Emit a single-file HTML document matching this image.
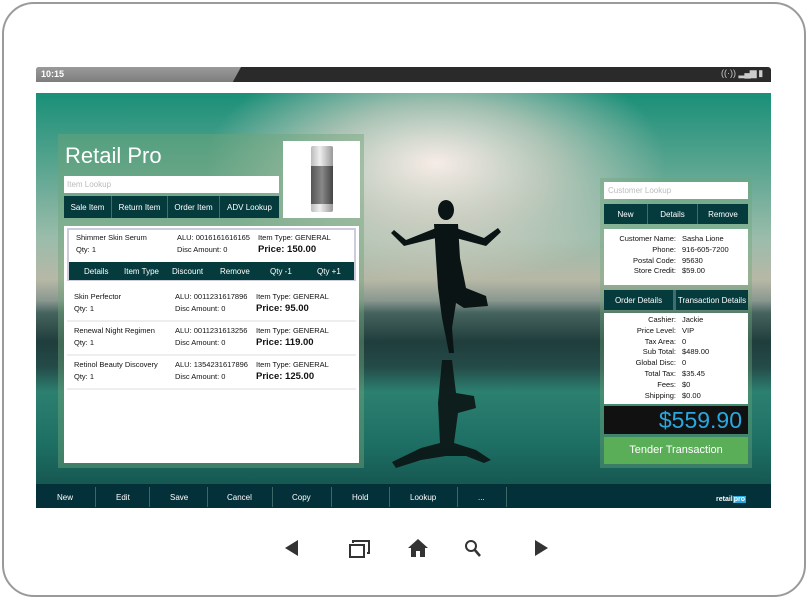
<!DOCTYPE html>
<html><head><meta charset="utf-8"><style>
*{margin:0;padding:0;box-sizing:border-box}
body{width:808px;height:600px;background:#fff;position:relative;overflow:hidden;font-family:"Liberation Sans",sans-serif}
.a{position:absolute}
.dev{left:2px;top:2px;width:804px;height:595px;border:2px solid #9a9a9a;border-radius:32px;background:#fff}
.status{left:36px;top:67px;width:735px;height:15px;background:#2a2a2a;border-radius:3px 3px 0 0;overflow:hidden}
.screen{left:36px;top:93px;width:735px;height:415px;overflow:hidden;
background:
radial-gradient(ellipse 230px 120px at 400px 70px,rgba(255,240,235,.95),rgba(240,220,210,.6) 50%,rgba(200,210,200,0) 100%),
linear-gradient(180deg,#1a8f78 0%,#5aa590 18%,#9bbcab 35%,#b7b8a6 45%,#8a9890 50%,#46635e 53%,#1f3d3c 60%,#244b48 66%,#2c8070 72%,#1d6e63 85%,#114a47 100%)}
.lp{left:22px;top:41px;width:306px;height:334px;background:rgba(110,165,120,.45)}
.btn{background:#063b3e;color:#fff;font-size:8px;display:flex;align-items:center;justify-content:center;border-right:1px solid #3c6f6f}
.row{display:flex}
.t{font-size:7.5px;color:#111;line-height:12px}
.b{font-weight:bold;font-size:9.5px}
.tb span{position:absolute;top:9px;color:#fff;font-size:8px}
.sep{position:absolute;top:3px;width:1px;height:20px;background:#3d6868}
.kv{display:flex;font-size:7.5px;line-height:10.8px;color:#111}
.kv b{font-weight:normal;width:72px;text-align:right;margin-right:6px}
</style></head><body>
<div class="a dev"></div>
<div class="a status">
 <div class="a" style="left:0;top:0;width:205px;height:15px;background:linear-gradient(#9a9a9a,#7d7d7d);clip-path:polygon(0 0,100% 0,96% 100%,0 100%)"></div>
 <div class="a" style="left:5px;top:2px;color:#fff;font-size:9px;font-weight:bold">10:15</div>
 <div class="a" style="left:685px;top:1px;color:#ccc;font-size:9px">((·)) <span style="letter-spacing:-1px">▂▄▆</span> ▮</div>
</div>
<div class="a screen">
 <svg class="a" style="left:340px;top:95px" width="140" height="300" viewBox="0 0 140 300">
  <g fill="#0b1414">
   <ellipse cx="70" cy="22" rx="8" ry="10"/>
   <path d="M58 36 L82 36 L84 70 L90 100 L110 108 L112 118 L88 120 L80 115 L76 140 L78 165 L73 165 L66 130 L62 100 L60 70 Z"/>
   <path d="M60 40 L30 52 L18 42 L15 45 L28 58 L60 50 Z"/>
   <path d="M80 40 L108 50 L122 40 L125 44 L110 58 L80 50 Z"/>
   <path d="M66 172 L76 172 L80 205 L98 208 L100 220 L82 225 L78 255 L100 262 L115 272 L108 275 L90 268 L70 268 L45 272 L20 280 L16 274 L45 260 L64 255 L62 215 Z" opacity=".9"/>
  </g>
 </svg>
 <div class="a lp"></div>
 <div class="a" style="left:29px;top:50px;color:#fff;font-size:22px;font-weight:300">Retail Pro</div>
 <div class="a" style="left:28px;top:83px;width:215px;height:17px;background:#fff;font-size:8px;color:#bbb;padding:4px 3px">Item Lookup</div>
 <div class="a row" style="left:28px;top:103px;width:215px;height:22px">
  <div class="btn" style="width:48px">Sale Item</div><div class="btn" style="width:56px">Return Item</div><div class="btn" style="width:52px">Order Item</div><div class="btn" style="width:59px;border:0">ADV Lookup</div>
 </div>
 <div class="a" style="left:247px;top:48px;width:77px;height:77px;background:#fff">
  <div class="a" style="left:28px;top:5px;width:22px;height:66px;background:linear-gradient(90deg,#bbb,#eee 40%,#999);border-radius:2px"></div>
  <div class="a" style="left:28px;top:25px;width:22px;height:38px;background:linear-gradient(90deg,#555,#888 50%,#444)"></div>
 </div>
 <div class="a" style="left:28px;top:133px;width:295px;height:237px;background:#fff">
  <div class="a" style="left:3px;top:2px;width:289px;height:53px;border:2px solid #ccd">
   <div class="a t" style="left:7px;top:2px">Shimmer Skin Serum<br>Qty: 1</div>
   <div class="a t" style="left:108px;top:2px">ALU: 0016161616165<br>Disc Amount: 0</div>
   <div class="a t" style="left:189px;top:2px">Item Type: GENERAL<br><span class="b">Price: 150.00</span></div>
   <div class="a" style="left:0;top:32px;width:285px;height:18px;background:#063b3e;color:#fff;font-size:8px">
    <span class="a" style="left:15px;top:5px">Details</span><span class="a" style="left:55px;top:5px">Item Type</span><span class="a" style="left:103px;top:5px">Discount</span><span class="a" style="left:151px;top:5px">Remove</span><span class="a" style="left:201px;top:5px">Qty -1</span><span class="a" style="left:248px;top:5px">Qty +1</span>
   </div>
  </div>
  <div class="a t" style="left:10px;top:65px">Skin Perfector<br>Qty: 1</div>
  <div class="a t" style="left:111px;top:65px">ALU: 0011231617896<br>Disc Amount: 0</div>
  <div class="a t" style="left:192px;top:65px">Item Type: GENERAL<br><span class="b">Price: 95.00</span></div>
  <div class="a" style="left:3px;top:94px;width:289px;height:2px;background:#eee"></div>
  <div class="a t" style="left:10px;top:99px">Renewal Night Regimen<br>Qty: 1</div>
  <div class="a t" style="left:111px;top:99px">ALU: 0011231613256<br>Disc Amount: 0</div>
  <div class="a t" style="left:192px;top:99px">Item Type: GENERAL<br><span class="b">Price: 119.00</span></div>
  <div class="a" style="left:3px;top:128px;width:289px;height:2px;background:#eee"></div>
  <div class="a t" style="left:10px;top:133px">Retinol Beauty Discovery<br>Qty: 1</div>
  <div class="a t" style="left:111px;top:133px">ALU: 1354231617896<br>Disc Amount: 0</div>
  <div class="a t" style="left:192px;top:133px">Item Type: GENERAL<br><span class="b">Price: 125.00</span></div>
  <div class="a" style="left:3px;top:162px;width:289px;height:2px;background:#eee"></div>
 </div>
 <div class="a" style="left:564px;top:85px;width:152px;height:290px;background:rgba(110,165,120,.4)"></div>
 <div class="a" style="left:568px;top:89px;width:144px;height:17px;background:#fff;font-size:8px;color:#bbb;padding:4px 4px">Customer Lookup</div>
 <div class="a row" style="left:568px;top:111px;width:144px;height:20px">
  <div class="btn" style="width:44px">New</div><div class="btn" style="width:50px">Details</div><div class="btn" style="width:50px;border:0">Remove</div>
 </div>
 <div class="a" style="left:568px;top:136px;width:144px;height:56px;background:#fff;padding-top:5px">
  <div class="kv"><b>Customer Name:</b>Sasha Lione</div><div class="kv"><b>Phone:</b>916-605-7200</div><div class="kv"><b>Postal Code:</b>95630</div><div class="kv"><b>Store Credit:</b>$59.00</div>
 </div>
 <div class="a row" style="left:568px;top:197px;width:144px;height:20px">
  <div class="btn" style="width:72px;border-right:3px solid #3c6f6f">Order Details</div><div class="btn" style="width:72px;border:0">Transaction Details</div>
 </div>
 <div class="a" style="left:568px;top:220px;width:144px;height:91px;background:#fff;padding-top:2px">
  <div class="kv"><b>Cashier:</b>Jackie</div><div class="kv"><b>Price Level:</b>VIP</div><div class="kv"><b>Tax Area:</b>0</div><div class="kv"><b>Sub Total:</b>$489.00</div><div class="kv"><b>Global Disc:</b>0</div><div class="kv"><b>Total Tax:</b>$35.45</div><div class="kv"><b>Fees:</b>$0</div><div class="kv"><b>Shipping:</b>$0.00</div>
 </div>
 <div class="a" style="left:568px;top:313px;width:144px;height:28px;background:#111;color:#29a8e0;font-size:23px;text-align:right;padding-right:6px;line-height:28px">$559.90</div>
 <div class="a" style="left:568px;top:344px;width:144px;height:27px;background:#5aae58;color:#fff;font-size:11px;text-align:center;line-height:27px">Tender Transaction</div>
 <div class="a tb" style="left:0;top:391px;width:735px;height:24px;background:#04303a">
  <span style="left:21px">New</span><span style="left:80px">Edit</span><span style="left:134px">Save</span><span style="left:191px">Cancel</span><span style="left:256px">Copy</span><span style="left:316px">Hold</span><span style="left:374px">Lookup</span><span style="left:442px">...</span>
  <div class="sep" style="left:59px"></div><div class="sep" style="left:113px"></div><div class="sep" style="left:171px"></div><div class="sep" style="left:236px"></div><div class="sep" style="left:295px"></div><div class="sep" style="left:353px"></div><div class="sep" style="left:421px"></div><div class="sep" style="left:470px"></div>
  <span style="left:680px;top:12px;font-size:7px;font-weight:bold">retail<i style="background:#29a8e0;font-style:normal;padding:0 1px">pro</i></span>
 </div>
</div>
<svg class="a" style="left:280px;top:535px" width="280" height="26" viewBox="0 0 280 26">
 <g fill="#333">
  <path d="M5 13 L18 5 L18 21 Z"/>
  <rect x="70" y="10" width="14" height="12" fill="none" stroke="#333" stroke-width="2"/>
  <path d="M73 8 V6 H89 V18 H87" fill="none" stroke="#333" stroke-width="2"/>
  <path d="M128 13 L138 4 L148 13 H145 V22 H140 V16 H136 V22 H131 V13 Z"/>
  <circle cx="191" cy="11" r="5" fill="none" stroke="#333" stroke-width="2"/>
  <path d="M194 14 L200 21" stroke="#333" stroke-width="2.5"/>
  <path d="M255 5 L268 13 L255 21 Z"/>
 </g>
</svg>
</body></html>
